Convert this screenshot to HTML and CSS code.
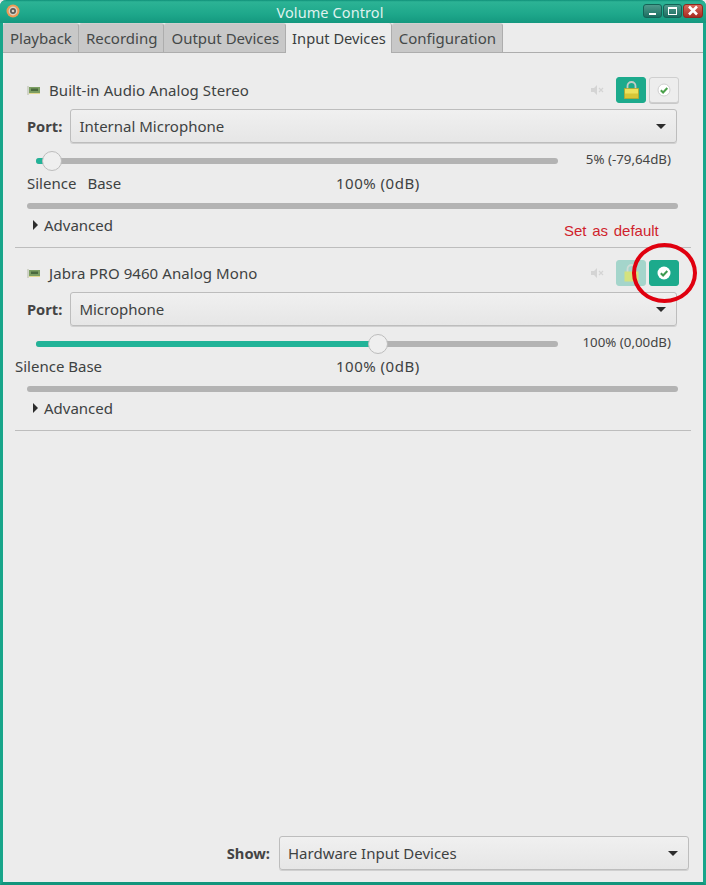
FILE: index.html
```html
<!DOCTYPE html>
<html lang="en">
<head>
<meta charset="utf-8">
<title>Volume Control</title>
<link rel="stylesheet" href="styles.css">
</head>
<body>
<div class="window">
  <header class="titlebar">
    <svg class="app-icon" width="14" height="14" viewBox="0 0 14 14"><circle cx="7" cy="7" r="6.5" fill="#ee9a55"/><circle cx="7" cy="7" r="4.4" fill="#d9d2c4"/><circle cx="7" cy="7" r="3" fill="#5d5a55"/><circle cx="7" cy="7" r="1.3" fill="#d8d2c8"/></svg>
    <span class="title">Volume Control</span>
    <div class="wm-buttons">
      <span class="wm wm-min"><i class="glyph-min"></i></span>
      <span class="wm wm-max"><i class="glyph-max"></i></span>
      <span class="wm wm-close"><svg width="12" height="11" viewBox="0 0 12 11"><path d="M2 1.5l8 8M10 1.5l-8 8" stroke="#fff" stroke-width="2.6" fill="none"/></svg></span>
    </div>
  </header>
  <nav class="tabs">
    <span class="tab">Playback</span>
    <span class="tab">Recording</span>
    <span class="tab">Output Devices</span>
    <span class="tab active">Input Devices</span>
    <span class="tab">Configuration</span>
  </nav>
  <main class="panel">
    <section class="device">
      <div class="dev-head">
        <svg class="card" width="14" height="12" viewBox="0 0 14 12"><path d="M1 2v9" stroke="#b4baa4" stroke-width="1"/><rect x="2" y="3" width="11" height="6" fill="#7c9e62"/><rect x="4" y="4.5" width="7" height="2.5" fill="#4a6a3e"/><path d="M2 9.5h11" stroke="#e2d890" stroke-width="1"/></svg>
        <span class="dev-name">Built-in Audio Analog Stereo</span>
        <svg class="mute" width="14" height="12" viewBox="0 0 14 12"><path d="M1 4h3l3-3v10l-3-3H1z" fill="#d4d4d4"/><path d="M9 4l4 4M13 4l-4 4" stroke="#d4d4d4" stroke-width="1.2"/></svg>
        <button class="tool on">
          <svg width="15" height="18" viewBox="0 0 15 18"><path d="M3.5 8V5a4 4 0 0 1 8 0V8" fill="none" stroke="#c4cbc6" stroke-width="1.8"/><rect x=".5" y="7.5" width="14" height="10" fill="#ece25c" stroke="#b5a52c" stroke-width=".8"/><rect x="1" y="12.5" width="13" height="4.5" fill="#d6c637"/></svg>
        </button>
        <button class="tool">
          <svg width="14" height="14" viewBox="0 0 14 14"><circle cx="7" cy="7" r="6" fill="#fff" stroke="#d0d0d0"/><path d="M3.8 7.2l2.3 2.3 4.2-4.5" fill="none" stroke="#4aa04a" stroke-width="2"/></svg>
        </button>
      </div>
      <div class="port">
        <span class="port-label">Port:</span>
        <div class="combo"><span>Internal Microphone</span><i class="caret"></i></div>
      </div>
      <div class="slider-row">
        <div class="slider"><div class="fill" style="width:16px"></div><div class="thumb" style="left:6px"></div></div>
        <span class="vol">5% (-79,64dB)</span>
      </div>
      <div class="marks">
        <span class="mark-left"><span class="silence-gap">Silence</span><span>Base</span></span>
        <span class="mark-mid">100% (0dB)</span>
      </div>
      <div class="scale"></div>
      <div class="advanced"><i class="arrow"></i><span>Advanced</span></div>
    </section>
    <section class="device">
      <div class="dev-head">
        <svg class="card" width="14" height="12" viewBox="0 0 14 12"><path d="M1 2v9" stroke="#b4baa4" stroke-width="1"/><rect x="2" y="3" width="11" height="6" fill="#7c9e62"/><rect x="4" y="4.5" width="7" height="2.5" fill="#4a6a3e"/><path d="M2 9.5h11" stroke="#e2d890" stroke-width="1"/></svg>
        <span class="dev-name">Jabra PRO 9460 Analog Mono</span>
        <svg class="mute" width="14" height="12" viewBox="0 0 14 12"><path d="M1 4h3l3-3v10l-3-3H1z" fill="#d4d4d4"/><path d="M9 4l4 4M13 4l-4 4" stroke="#d4d4d4" stroke-width="1.2"/></svg>
        <button class="tool on faded">
          <svg width="15" height="18" viewBox="0 0 15 18"><path d="M3.5 8V5a4 4 0 0 1 8 0V8" fill="none" stroke="#cfdcd6" stroke-width="1.8"/><rect x=".5" y="7.5" width="14" height="10" fill="#d4e27e"/></svg>
        </button>
        <button class="tool on">
          <svg width="14" height="14" viewBox="0 0 14 14"><circle cx="7" cy="7" r="6.5" fill="#fff"/><path d="M3.8 7.2l2.3 2.3 4.2-4.5" fill="none" stroke="#3c9a50" stroke-width="2"/></svg>
        </button>
      </div>
      <div class="port">
        <span class="port-label">Port:</span>
        <div class="combo"><span>Microphone</span><i class="caret"></i></div>
      </div>
      <div class="slider-row">
        <div class="slider"><div class="fill" style="width:342px"></div><div class="thumb" style="left:332px"></div></div>
        <span class="vol">100% (0,00dB)</span>
      </div>
      <div class="marks wide">
        <span class="mark-left">Silence Base</span>
        <span class="mark-mid">100% (0dB)</span>
      </div>
      <div class="scale"></div>
      <div class="advanced"><i class="arrow"></i><span>Advanced</span></div>
    </section>
    <footer class="show">
      <span class="port-label">Show:</span>
      <div class="combo show-combo"><span>Hardware Input Devices</span><i class="caret"></i></div>
    </footer>
  </main>
</div>
<div class="note">Set as default</div>
<div class="ring"></div>
</body>
</html>
```
FILE: styles.css
```css
* { box-sizing: border-box; }
html, body { margin: 0; padding: 0; }
body {
  width: 706px; height: 885px; position: relative; overflow: hidden;
  font-family: "Noto Sans", sans-serif; font-size: 15px; color: #3e4242; background: #ececec;
}
.window {
  width: 706px; height: 885px; display: flex; flex-direction: column;
  border: 3px solid #17a58a; border-top: 0; border-bottom: 3px solid #12957c;
  border-radius: 6px 6px 0 0; box-shadow: inset 0 0 0 1px #e8f0ee;
}
.titlebar {
  height: 23px; margin: 0 -3px; flex: none; display: flex; align-items: center; position: relative;
  background: linear-gradient(#0f8f78 0, #2cb395 8%, #1ea88b 60%, #14987f 100%);
  border-radius: 6px 6px 0 0;
}
.app-icon { margin-left: 6px; margin-top: -1px; }
.title {
  position: absolute; left: 0; right: 46px; text-align: center;
  font-size: 14.5px; color: #dff2ee; letter-spacing: .1px;
}
.wm-buttons { margin-left: auto; margin-right: 3px; display: flex; gap: 1px; margin-top: -2px; }
.wm {
  width: 19px; height: 14px; border-radius: 3px; display: flex; align-items: center; justify-content: center;
  background: linear-gradient(#4f9a8c, #1c6f62); border: 1px solid #156457;
}
.wm-close { width: 20px; background: linear-gradient(#d8685a, #a82c22); border-color: #8e2a20; }
.glyph-min { width: 7px; height: 2px; background: #fff; margin-top: 7px; }
.glyph-max { width: 9px; height: 8px; border: 1.5px solid #fff; border-top-width: 2px; }
.tabs {
  height: 30px; flex: none; display: flex; align-items: flex-start;
  background: #ececec; border-bottom: 1px solid #adadad;
}
.tab {
  padding: 0 6px 0 7px; height: 29px; line-height: 29px; background: #c8c8c8; color: #454848;
  border-right: 1px solid #adadad; border-top: 1px solid #cfcfcf; border-radius: 3px 3px 0 0;
  white-space: nowrap; font-size: 15px;
}
.tab.active {
  background: #ececec; height: 30px; line-height: 31px; border-top: 0; padding: 0 5px 0 6px;
  font-size: 14.7px; color: #3a3e3e;
}
.panel { flex: 1; display: flex; flex-direction: column; padding: 24px 12px 0; min-height: 0; }
.device { height: 183px; border-bottom: 1px solid #bdbdbd; }
.device:first-child { height: 171px; }
.dev-head { height: 26px; display: flex; align-items: center; padding-left: 12px; }
.device + .device .dev-head { margin-top: 12px; }
.dev-name { margin-left: 8px; letter-spacing: .07px; }
.card { flex: none; margin-top: -1px; }
.mute { margin-left: auto; margin-right: 12px; }
.tool {
  width: 30px; height: 26px; padding: 0; margin: 0; border-radius: 3px; border: 1px solid #cfcfcf;
  background: #ededed; display: flex; align-items: center; justify-content: center;
  box-shadow: 0 1px 0 #c8c8c8;
}
.tool.on { background: #1caa8c; border-color: #1caa8c; margin-right: 3px; box-shadow: none; }
.tool:last-child { margin-right: 12px; }
.faded { background: #a4d5cb !important; border-color: #a4d5cb !important; }
.port { display: flex; align-items: center; height: 34px; margin-top: 6px; padding-left: 12px; padding-right: 14px; }
.port-label { font-weight: 700; font-size: 14.7px; color: #444; margin-right: 8px; }
.combo {
  flex: 1; height: 34px; border: 1px solid #bdbdbd; border-radius: 3px; display: flex; align-items: center;
  padding: 0 8px; background: linear-gradient(#f0f0f0, #e6e6e6); box-shadow: 0 1px 0 #d0d0d0; justify-content: space-between;
}
.caret { width: 0; height: 0; border: 5px solid transparent; border-top: 5px solid #2c2c2c; border-bottom: 0; margin-right: 2px; }
.slider-row { height: 17px; margin-top: 7px; padding-left: 21px; display: flex; align-items: center; position: relative; }
.slider { width: 522px; height: 6px; margin-top: 4px; background: #b3b3b3; border-radius: 3px; position: relative; }
.fill { height: 6px; background: #22b398; border-radius: 3px; }
.thumb {
  position: absolute; top: -7px; width: 20px; height: 20px; border-radius: 50%;
  background: #efefef; border: 1px solid #bdbdbd;
}
.vol { font-size: 13.3px; margin-left: auto; margin-right: 20px; color: #444; }
.marks { height: 24px; margin-top: 4px; display: flex; align-items: center; }
.mark-left { width: 321px; padding-left: 12px; flex: none; }
.wide .mark-left { padding-left: 0; }
.mark-mid { letter-spacing: .5px; }
.silence-gap { margin-right: 11px; }
.scale { width: 651px; height: 6px; margin-left: 12px; margin-top: 8px; background: #b3b3b3; border-radius: 3px; }
.advanced { height: 22px; margin-top: 5px; padding-left: 18px; display: flex; align-items: center; gap: 6px; }
.arrow { width: 0; height: 0; border: 5px solid transparent; border-left: 5px solid #2c2c2c; border-right: 0; }
.show { margin-top: auto; display: flex; align-items: center; justify-content: flex-end; padding-right: 2px; margin-bottom: 12px; height: 34px; }
.show .port-label { margin-right: 9px; }
.show-combo { flex: none; width: 410px; }
.note {
  position: absolute; left: 564px; top: 222px; font-family: "Liberation Sans", sans-serif;
  font-size: 15px; color: #d01f2c; word-spacing: 1.5px;
}
.ring {
  position: absolute; left: 632px; top: 243px; width: 65px; height: 60px; border-radius: 50%;
  border: 4.5px solid #e0000f;
}
```
